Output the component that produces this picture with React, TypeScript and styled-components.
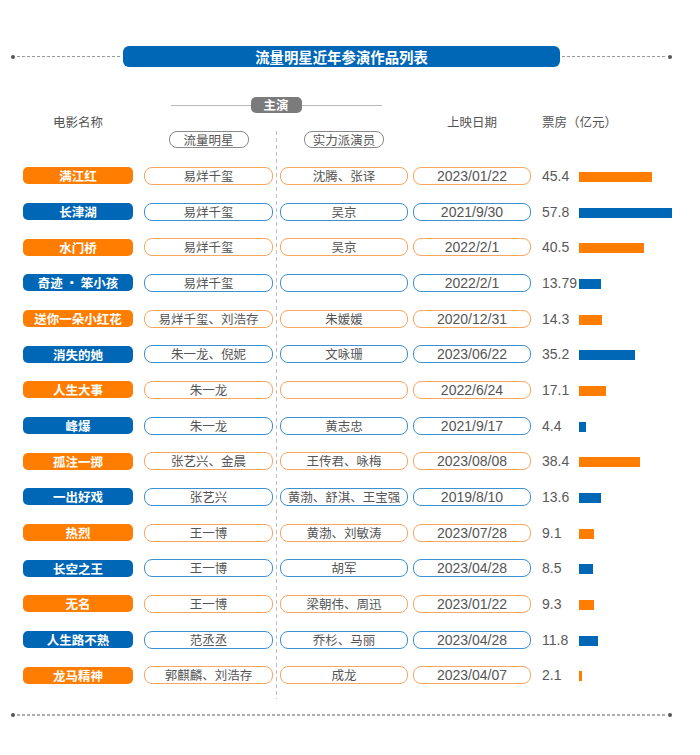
import React from "react";
import styled, { createGlobalStyle } from "styled-components";

const GlobalStyle = createGlobalStyle`
  html, body { margin: 0; padding: 0; background: #ffffff; }
  body { font-family: "Liberation Sans", "Noto Sans CJK SC", sans-serif; color: #555; }
`;

const ORANGE = "#FF7D00";
const BLUE = "#0067B7";
const ORANGE_LINE = "#F9A65E";
const BLUE_LINE = "#3E91D1";

type Film = { name: string; stars: string; actors: string; date: string; box: number; label: string };

const films: Film[] = [
  { name: "满江红", stars: "易烊千玺", actors: "沈腾、张译", date: "2023/01/22", box: 45.4, label: "45.4" },
  { name: "长津湖", stars: "易烊千玺", actors: "吴京", date: "2021/9/30", box: 57.8, label: "57.8" },
  { name: "水门桥", stars: "易烊千玺", actors: "吴京", date: "2022/2/1", box: 40.5, label: "40.5" },
  { name: "奇迹 · 笨小孩", stars: "易烊千玺", actors: "", date: "2022/2/1", box: 13.79, label: "13.79" },
  { name: "送你一朵小红花", stars: "易烊千玺、刘浩存", actors: "朱媛媛", date: "2020/12/31", box: 14.3, label: "14.3" },
  { name: "消失的她", stars: "朱一龙、倪妮", actors: "文咏珊", date: "2023/06/22", box: 35.2, label: "35.2" },
  { name: "人生大事", stars: "朱一龙", actors: "", date: "2022/6/24", box: 17.1, label: "17.1" },
  { name: "峰爆", stars: "朱一龙", actors: "黄志忠", date: "2021/9/17", box: 4.4, label: "4.4" },
  { name: "孤注一掷", stars: "张艺兴、金晨", actors: "王传君、咏梅", date: "2023/08/08", box: 38.4, label: "38.4" },
  { name: "一出好戏", stars: "张艺兴", actors: "黄渤、舒淇、王宝强", date: "2019/8/10", box: 13.6, label: "13.6" },
  { name: "热烈", stars: "王一博", actors: "黄渤、刘敏涛", date: "2023/07/28", box: 9.1, label: "9.1" },
  { name: "长空之王", stars: "王一博", actors: "胡军", date: "2023/04/28", box: 8.5, label: "8.5" },
  { name: "无名", stars: "王一博", actors: "梁朝伟、周迅", date: "2023/01/22", box: 9.3, label: "9.3" },
  { name: "人生路不熟", stars: "范丞丞", actors: "乔杉、马丽", date: "2023/04/28", box: 11.8, label: "11.8" },
  { name: "龙马精神", stars: "郭麒麟、刘浩存", actors: "成龙", date: "2023/04/07", box: 2.1, label: "2.1" },
];

const Page = styled.div`
  width: 700px;
  padding-top: 46px;
  padding-bottom: 30px;
`;

const TitleRow = styled.div`
  display: flex;
  align-items: center;
  width: 661px;
  margin-left: 11px;
`;

const Dot = styled.span`
  width: 4px;
  height: 4px;
  border-radius: 50%;
  background: #555;
  flex: none;
`;

const DashLine = styled.span<{ $thick?: boolean }>`
  flex: 1;
  height: ${(p) => (p.$thick ? "2px" : "1px")};
  margin: 0 2px;
  background: ${(p) =>
    p.$thick
      ? "repeating-linear-gradient(to right, #b0b0b0 0 3px, transparent 3px 5px)"
      : "repeating-linear-gradient(to right, #9a9a9a 0 3px, transparent 3px 5px)"};
`;

const TitleBar = styled.div`
  width: 437px;
  height: 21px;
  border-radius: 6px;
  background: ${BLUE};
  color: #fff;
  font-family: "Noto Sans CJK SC", sans-serif;
  font-weight: 700;
  font-size: 14.4px;
  line-height: 21px;
  text-align: center;
  flex: none;
`;

const Table = styled.div`
  display: grid;
  grid-template-columns: 110px 11px 129px 7px 128px 5px 118px 11px 37px 92px;
  grid-template-rows: 33.5px 27.67px repeat(15, 35.67px) 6px;
  margin: 30px 0 0 23px;
  width: max-content;
`;

const HeadLabel = styled.div<{ $col: string; $align?: string }>`
  grid-column: ${(p) => p.$col};
  grid-row: 1 / span 2;
  align-self: center;
  justify-self: ${(p) => p.$align || "center"};
  padding-bottom: 10.67px;
  font-family: "Noto Sans CJK SC", sans-serif;
  font-size: 12.5px;
  line-height: 16px;
  color: #555;
  white-space: nowrap;
`;

const LeadGroup = styled.div`
  grid-column: 3 / span 3;
  grid-row: 1;
  align-self: start;
  justify-self: center;
  width: 211px;
  display: flex;
  align-items: center;
`;

const LeadLine = styled.span`
  flex: 1;
  height: 1px;
  background: #b8b8b8;
`;

const LeadBadge = styled.span`
  width: 51px;
  height: 16px;
  border-radius: 5px;
  background: #7b7b7b;
  color: #fff;
  font-family: "Noto Sans CJK SC", sans-serif;
  font-weight: 700;
  font-size: 12.5px;
  line-height: 16px;
  text-align: center;
`;

const SubPill = styled.div<{ $col: number }>`
  grid-column: ${(p) => p.$col};
  grid-row: 2;
  align-self: start;
  justify-self: center;
  box-sizing: border-box;
  width: 80px;
  height: 17px;
  border: 1px solid #8a8a8a;
  border-radius: 8px;
  font-family: "Noto Sans CJK SC", sans-serif;
  font-size: 12.5px;
  line-height: 15px;
  text-align: center;
  color: #555;
`;

const Divider = styled.div`
  grid-column: 4;
  grid-row: 2 / -1;
  justify-self: center;
  width: 1px;
  background: repeating-linear-gradient(to bottom, #bdbdbd 0 4px, transparent 4px 7px);
`;

const Row = styled.div`
  display: contents;
`;

const NamePill = styled.div<{ $color: string }>`
  grid-column: 1;
  align-self: center;
  height: 17px;
  border-radius: 5px;
  background: ${(p) => p.$color};
  color: #fff;
  font-family: "Noto Sans CJK SC", sans-serif;
  font-weight: 700;
  font-size: 12.5px;
  line-height: 17px;
  text-align: center;
  white-space: nowrap;
`;

const OutlinePill = styled.div<{ $col: number; $line: string; $digits?: boolean }>`
  grid-column: ${(p) => p.$col};
  align-self: center;
  box-sizing: border-box;
  height: 18px;
  border: 1px solid ${(p) => p.$line};
  border-radius: 8px;
  background: #fff;
  color: #555;
  font-family: ${(p) => (p.$digits ? '"Liberation Sans", sans-serif' : '"Noto Sans CJK SC", sans-serif')};
  font-size: ${(p) => (p.$digits ? "14px" : "12.5px")};
  line-height: 16px;
  text-align: center;
  white-space: nowrap;
`;

const BoxValue = styled.div`
  grid-column: 9;
  align-self: center;
  font-family: "Liberation Sans", sans-serif;
  font-size: 14px;
  line-height: 18px;
  color: #595959;
`;

const Bar = styled.div<{ $color: string }>`
  grid-column: 10;
  align-self: center;
  justify-self: start;
  height: 10px;
  margin-top: 2px;
  background: ${(p) => p.$color};
`;

const FootRow = styled(TitleRow)`
  margin-top: 14px;
`;

export default function App() {
  return (
    <Page>
      <GlobalStyle />
      <TitleRow>
        <Dot />
        <DashLine />
        <TitleBar>流量明星近年参演作品列表</TitleBar>
        <DashLine />
        <Dot />
      </TitleRow>

      <Table>
        <HeadLabel $col="1">电影名称</HeadLabel>
        <LeadGroup>
          <LeadLine />
          <LeadBadge>主演</LeadBadge>
          <LeadLine />
        </LeadGroup>
        <SubPill $col={3}>流量明星</SubPill>
        <SubPill $col={5}>实力派演员</SubPill>
        <HeadLabel $col="7">上映日期</HeadLabel>
        <HeadLabel $col="9 / span 2" $align="start">票房（亿元）</HeadLabel>
        <Divider />

        {films.map((f, i) => {
          const fill = i % 2 === 0 ? ORANGE : BLUE;
          const line = i % 2 === 0 ? ORANGE_LINE : BLUE_LINE;
          return (
            <Row key={f.name}>
              <NamePill $color={fill}>{f.name}</NamePill>
              <OutlinePill $col={3} $line={line}>{f.stars}</OutlinePill>
              <OutlinePill $col={5} $line={line}>{f.actors}</OutlinePill>
              <OutlinePill $col={7} $line={line} $digits>{f.date}</OutlinePill>
              <BoxValue>{f.label}</BoxValue>
              <Bar $color={fill} style={{ width: `${(f.box * 1.6).toFixed(1)}px` }} />
            </Row>
          );
        })}
      </Table>

      <FootRow>
        <Dot />
        <DashLine $thick />
        <Dot />
      </FootRow>
    </Page>
  );
}
